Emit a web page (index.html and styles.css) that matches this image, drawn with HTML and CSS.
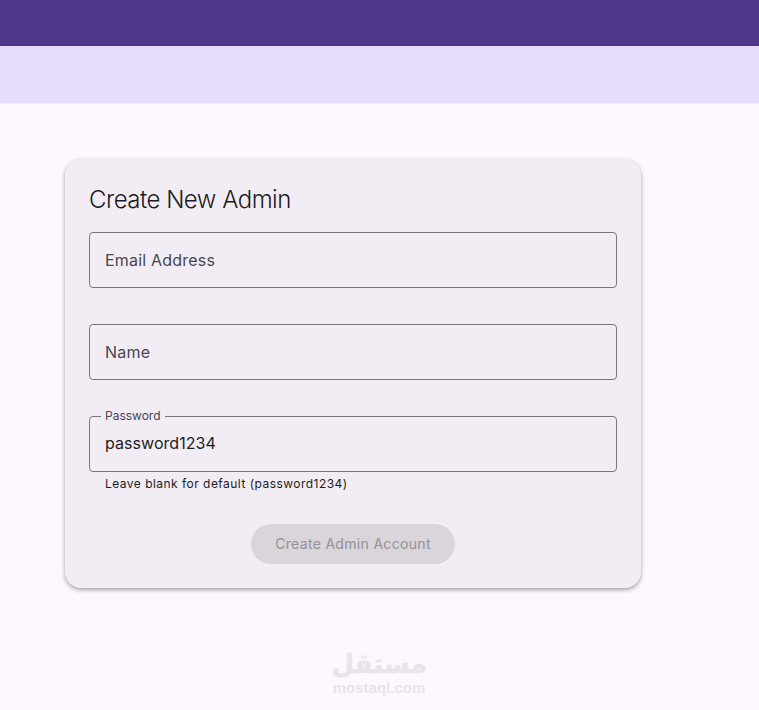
FILE: index.html
```html
<!DOCTYPE html>
<html>

<head>
    <meta charset="utf-8">
    <title>Create New Admin</title>
    <meta name="viewport" content="width=device-width, initial-scale=1">
    <link rel="stylesheet" href="styles.css">
</head>

<body>
    <header class="app-bar"></header>
    <nav class="tab-bar"></nav>

    <main class="content">
        <form class="card">
            <h2 class="card-title">Create New Admin</h2>

            <div class="field">
                <span class="field-label">Email Address</span>
            </div>

            <div class="field">
                <span class="field-label">Name</span>
            </div>

            <fieldset class="field field-filled">
                <legend class="field-legend">Password</legend>
                <span class="field-value">password1234</span>
            </fieldset>
            <p class="helper">Leave blank for default (password1234)</p>

            <div class="actions">
                <button class="submit" type="button" disabled>Create Admin Account</button>
            </div>
        </form>
    </main>

    <!-- watermark over the page -->
    <div class="watermark">
        <div class="watermark-ar" lang="ar" dir="rtl">مستقل</div>
        <div class="watermark-en">mostaql.com</div>
    </div>
</body>

</html>
```

FILE: styles.css
```css
* {
    box-sizing: border-box;
}

html,
body {
    height: 100%;
}

body {
    margin: 0;
    background-color: #fdf8ff;
    color: #1d1b20;
    font-family: Inter, "Noto Sans", Arial, sans-serif;
    overflow: hidden;
}

.app-bar {
    height: 46px;
    background-color: #4f378a;
}

.tab-bar {
    height: 57px;
    background-color: #e6dcfe;
    box-shadow: 0 1px 1px rgba(0, 0, 0, 0.04);
}

.content {
    padding: 56px 0 0 65px;
}

.card {
    width: 576px;
    height: 429px;
    padding: 24px;
    background-color: #f2edf4;
    border-radius: 16px;
    box-shadow: 0 2px 4px rgba(0, 0, 0, 0.35), 0 0 2px rgba(0, 0, 0, 0.03);
}

.card-title {
    margin: 0 0 16px;
    height: 33px;
    font-size: 24px;
    line-height: 33px;
    font-weight: 300;
    letter-spacing: -0.5px;
}

.field {
    display: flex;
    align-items: center;
    width: 528px;
    height: 56px;
    margin: 0 0 36px;
    padding: 0 15px;
    border: 1px solid #79747e;
    border-radius: 4px;
}

.field-label {
    font-size: 16px;
    letter-spacing: 0.2px;
    color: #49454f;
}

.field-filled {
    display: block;
    height: 64px;
    margin: -8px 0 0;
    padding: 0 15px;
    min-width: 0;
}

.field-legend {
    padding: 0 4px;
    margin-left: -4px;
    font-size: 12px;
    line-height: 16px;
    color: #49454f;
}

.field-value {
    display: block;
    margin-top: 7px;
    font-size: 16px;
    line-height: 24px;
    letter-spacing: 0.05px;
}

.helper {
    margin: 4px 0 0 16px;
    font-size: 12px;
    line-height: 16px;
    letter-spacing: 0.47px;
}

.actions {
    display: flex;
    justify-content: center;
    margin-top: 32px;
}

.submit {
    width: 204px;
    height: 40px;
    padding: 0 0 1px;
    border: 0;
    border-radius: 20px;
    background-color: #d9d5db;
    color: #948f99;
    font-family: inherit;
    font-size: 14px;
    font-weight: 400;
    letter-spacing: 0.32px;
}

.watermark {
    position: absolute;
    left: 329px;
    top: 647px;
    width: 100px;
    text-align: center;
    color: #e9e4ea;
}

.watermark-ar {
    font-family: "DejaVu Sans", sans-serif;
    font-size: 26px;
    line-height: 34px;
    font-weight: 700;
    -webkit-text-stroke: 0.6px #e9e4ea;
}

.watermark-en {
    font-family: "Liberation Sans", Arial, sans-serif;
    font-size: 15px;
    line-height: 14px;
    font-weight: 700;
}
```
